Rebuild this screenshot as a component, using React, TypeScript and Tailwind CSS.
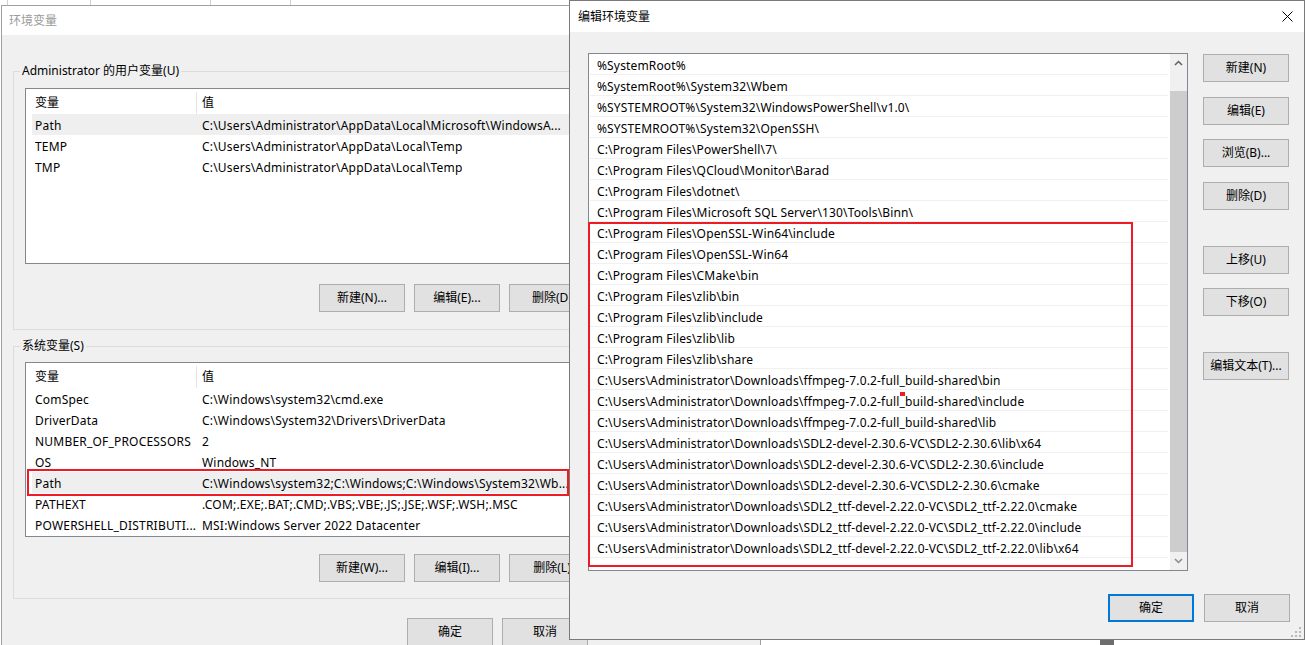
import React from 'react';

const FONT = "font-['Noto_Sans','Noto_Sans_CJK_SC',sans-serif]";

const userVars: [string, string][] = [
  ['Path', 'C:\\Users\\Administrator\\AppData\\Local\\Microsoft\\WindowsA...'],
  ['TEMP', 'C:\\Users\\Administrator\\AppData\\Local\\Temp'],
  ['TMP', 'C:\\Users\\Administrator\\AppData\\Local\\Temp'],
];

const sysVars: [string, string][] = [
  ['ComSpec', 'C:\\Windows\\system32\\cmd.exe'],
  ['DriverData', 'C:\\Windows\\System32\\Drivers\\DriverData'],
  ['NUMBER_OF_PROCESSORS', '2'],
  ['OS', 'Windows_NT'],
  ['Path', 'C:\\Windows\\system32;C:\\Windows;C:\\Windows\\System32\\Wb...'],
  ['PATHEXT', '.COM;.EXE;.BAT;.CMD;.VBS;.VBE;.JS;.JSE;.WSF;.WSH;.MSC'],
  ['POWERSHELL_DISTRIBUTI...', 'MSI:Windows Server 2022 Datacenter'],
];

const ffmpeg = 'C:\\Users\\Administrator\\Downloads\\ffmpeg-7.0.2-full_build-shared\\';
const sdl = 'C:\\Users\\Administrator\\Downloads\\SDL2-devel-2.30.6-VC\\SDL2-2.30.6\\';
const ttf = 'C:\\Users\\Administrator\\Downloads\\SDL2_ttf-devel-2.22.0-VC\\SDL2_ttf-2.22.0\\';

const paths = [
  '%SystemRoot%',
  '%SystemRoot%\\System32\\Wbem',
  '%SYSTEMROOT%\\System32\\WindowsPowerShell\\v1.0\\',
  '%SYSTEMROOT%\\System32\\OpenSSH\\',
  'C:\\Program Files\\PowerShell\\7\\',
  'C:\\Program Files\\QCloud\\Monitor\\Barad',
  'C:\\Program Files\\dotnet\\',
  'C:\\Program Files\\Microsoft SQL Server\\130\\Tools\\Binn\\',
  'C:\\Program Files\\OpenSSL-Win64\\include',
  'C:\\Program Files\\OpenSSL-Win64',
  'C:\\Program Files\\CMake\\bin',
  'C:\\Program Files\\zlib\\bin',
  'C:\\Program Files\\zlib\\include',
  'C:\\Program Files\\zlib\\lib',
  'C:\\Program Files\\zlib\\share',
  ffmpeg + 'bin',
  ffmpeg + 'include',
  ffmpeg + 'lib',
  sdl + 'lib\\x64',
  sdl + 'include',
  sdl + 'cmake',
  ttf + 'cmake',
  ttf + 'include',
  ttf + 'lib\\x64',
];

function Btn({ label, className = '', primary = false }: { label: string; className?: string; primary?: boolean }) {
  return (
    <div
      className={`flex h-[28px] w-[86px] shrink-0 items-center justify-center bg-[#e1e1e1] text-[12px] text-black ${
        primary ? 'border-2 border-[#0078d7]' : 'border border-[#adadad]'
      } ${className}`}
    >
      {label}
    </div>
  );
}

function VarList({ rows, height }: { rows: [string, string][]; height: string }) {
  return (
    <div className={`${height} border border-[#828790] bg-white`}>
      <div className="flex h-[25px] items-center pt-[3px]">
        <div className="flex h-full w-[171px] items-center border-r border-[#e5e5e5] pl-[9px]">变量</div>
        <div className="pl-[5px]">值</div>
      </div>
      {rows.map(([k, v]) => (
        <div key={k + v} className="flex h-[21px] items-center">
          <div
            className={`ml-[6px] flex h-full flex-1 items-center pt-[2px] tracking-[0.2px] ${
              k === 'Path' ? 'bg-[#efefef]' : ''
            }`}
          >
            <div className="w-[165px] whitespace-nowrap pl-[3px]">{k}</div>
            <div className="whitespace-nowrap pl-[5px]">{v}</div>
          </div>
        </div>
      ))}
    </div>
  );
}

function EnvWindow() {
  return (
    <div className="absolute left-[1px] top-[5px] h-[660px] w-[760px] border border-[#a0a0a0] bg-[#f0f0f0]">
      <div className="flex h-[29px] items-center bg-white pl-[7px] text-[12px] text-[#9a9a9a]">环境变量</div>
      <div className="px-[11px] pt-[28px]">
        <fieldset className="m-0 border border-[#dcdcdc] p-0">
          <legend className="ml-[6px] px-[2px] text-[12px] leading-[16px]">Administrator 的用户变量(U)</legend>
          <div className="px-[11px] pb-[17px]">
            <div className="mt-[9px]">
              <VarList rows={userVars} height="h-[176px]" />
            </div>
            <div className="ml-[294px] mt-[20px] flex gap-[9px]">
              <Btn label="新建(N)..." />
              <Btn label="编辑(E)..." />
              <Btn label="删除(D)" />
            </div>
          </div>
        </fieldset>
        <fieldset className="m-0 mt-[8px] border border-[#dcdcdc] p-0">
          <legend className="ml-[6px] px-[2px] text-[12px] leading-[16px]">系统变量(S)</legend>
          <div className="px-[11px] pb-[16px]">
            <div className="mt-[8px]">
              <VarList rows={sysVars} height="h-[175px]" />
            </div>
            <div className="ml-[294px] mt-[17px] flex gap-[9px]">
              <Btn label="新建(W)..." />
              <Btn label="编辑(I)..." />
              <Btn label="删除(L)" />
            </div>
          </div>
        </fieldset>
        <div className="ml-[394px] mt-[19px] flex gap-[9px]">
          <Btn label="确定" />
          <Btn label="取消" />
        </div>
      </div>
    </div>
  );
}

function EditDialog() {
  return (
    <div className="absolute left-[569px] top-0 flex h-[640px] w-[736px] flex-col border border-[#7a7a7a] bg-[#f0f0f0]">
      <div className="flex h-[31px] shrink-0 items-center justify-between bg-white pl-[8px] pr-[11px] text-[12px] text-black">
        <span>编辑环境变量</span>
        <svg width="11" height="11" viewBox="0 0 11 11">
          <path d="M0.5 0.5 L10.5 10.5 M10.5 0.5 L0.5 10.5" stroke="#000" strokeWidth="1" fill="none" />
        </svg>
      </div>
      <div className="flex pl-[18px] pt-[21px]">
        <div className="flex h-[518px] w-[600px] border border-[#828790] bg-white">
          <div className="flex-1 pl-[1px] pr-[2px]">
            {paths.map((p, i) => (
              <div
                key={i}
                className="flex h-[21px] items-center whitespace-nowrap border-b border-[#f0f0f0] pl-[7px] pt-[4px] tracking-[0.15px]"
              >
                {p}
              </div>
            ))}
          </div>
          <div className="flex w-[17px] flex-col bg-[#f0f0f0]">
            <div className="flex h-[17px] items-center justify-center">
              <svg width="9" height="6" viewBox="0 0 9 6">
                <path d="M1 5 L4.5 1.5 L8 5" stroke="#606060" strokeWidth="1.5" fill="none" />
              </svg>
            </div>
            <div className="h-[20px]" />
            <div className="h-[461px] bg-[#cdcdcd]" />
            <div className="flex h-[17px] items-center justify-center">
              <svg width="9" height="6" viewBox="0 0 9 6">
                <path d="M1 1 L4.5 4.5 L8 1" stroke="#8a8a8a" strokeWidth="1.5" fill="none" />
              </svg>
            </div>
          </div>
        </div>
        <div className="ml-[15px] flex flex-col">
          <Btn label="新建(N)" className="mt-[1px]" />
          <Btn label="编辑(E)" className="mt-[15px]" />
          <Btn label="浏览(B)..." className="mt-[14px]" />
          <Btn label="删除(D)" className="mt-[15px]" />
          <Btn label="上移(U)" className="mt-[36px]" />
          <Btn label="下移(O)" className="mt-[14px]" />
          <Btn label="编辑文本(T)..." className="mt-[36px]" />
        </div>
      </div>
      <div className="mt-[23px] flex justify-end gap-[10px] pr-[14px]">
        <Btn label="确定" primary />
        <Btn label="取消" />
      </div>
      <svg className="absolute bottom-[2px] right-[3px]" width="10" height="10" viewBox="0 0 10 10">
        {[
          [8, 0],
          [4, 4],
          [8, 4],
          [0, 8],
          [4, 8],
          [8, 8],
        ].map(([x, y]) => (
          <rect key={`${x}-${y}`} x={x} y={y} width="2" height="2" fill="#b8b8b8" />
        ))}
      </svg>
    </div>
  );
}

export default function App() {
  return (
    <div className={`relative h-[645px] w-[1305px] overflow-hidden bg-white text-[12px] text-black ${FONT}`}>
      {/* window behind, only a sliver shows */}
      <div className="flex h-[5px]">
        <div className="w-[8px] border-r border-[#d0d0d0]" />
        <div className="w-[83px] border-r border-[#d0d0d0]" />
        <div className="w-[120px] border-r border-[#d0d0d0]" />
        <div className="w-[80px] border-r border-[#d0d0d0]" />
      </div>
      <EnvWindow />
      <EditDialog />
      <div className="absolute left-[1100px] top-[640px] h-[5px] w-[14px] bg-[#6d6d6d]" />
      {/* annotations */}
      <div className="absolute left-[27px] top-[469px] h-[27px] w-[542px] border-2 border-[#ed1c24]" />
      <div className="absolute left-[588px] top-[222px] h-[345px] w-[545px] border-2 border-[#ed1c24]" />
      <div className="absolute left-[900px] top-[392px] h-[4px] w-[5px] bg-[#ed1c24]" />
    </div>
  );
}
